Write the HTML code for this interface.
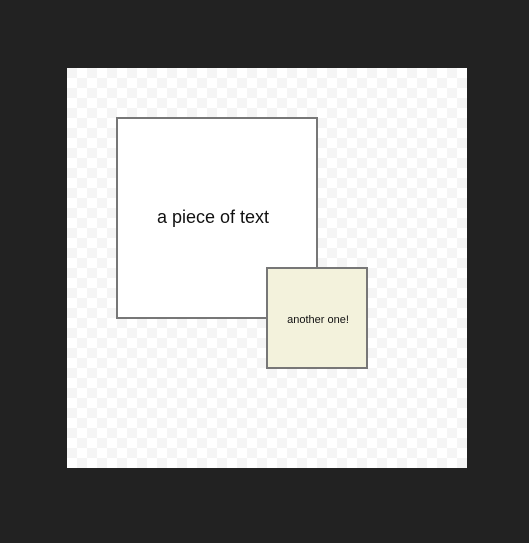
<!DOCTYPE html>
<html><head><style>
html,body{margin:0;padding:0;}
body{width:529px;height:543px;background:#222;position:relative;overflow:hidden;font-family:"Liberation Sans",Arial,sans-serif;}
#c{position:absolute;left:67px;top:68px;width:400px;height:400px;
background:conic-gradient(#fff 25%,#f5f5f5 0 50%,#fff 0 75%,#f5f5f5 0) 0 0/20px 20px;}
.b{position:absolute;box-sizing:border-box;border:2px solid #777;display:flex;align-items:center;justify-content:center;color:#111;}
</style></head><body>
<div id="c"></div>
<div class="b" style="left:116px;top:117px;width:202px;height:202px;background:#fff;font-size:18px;"><span style="position:relative;left:-4px;top:-1px">a piece of text</span></div>
<div class="b" style="left:266px;top:267px;width:102px;height:102px;background:#f3f2dc;font-size:11px;"><span style="position:relative;left:1px;top:2px">another one!</span></div>
</body></html>
